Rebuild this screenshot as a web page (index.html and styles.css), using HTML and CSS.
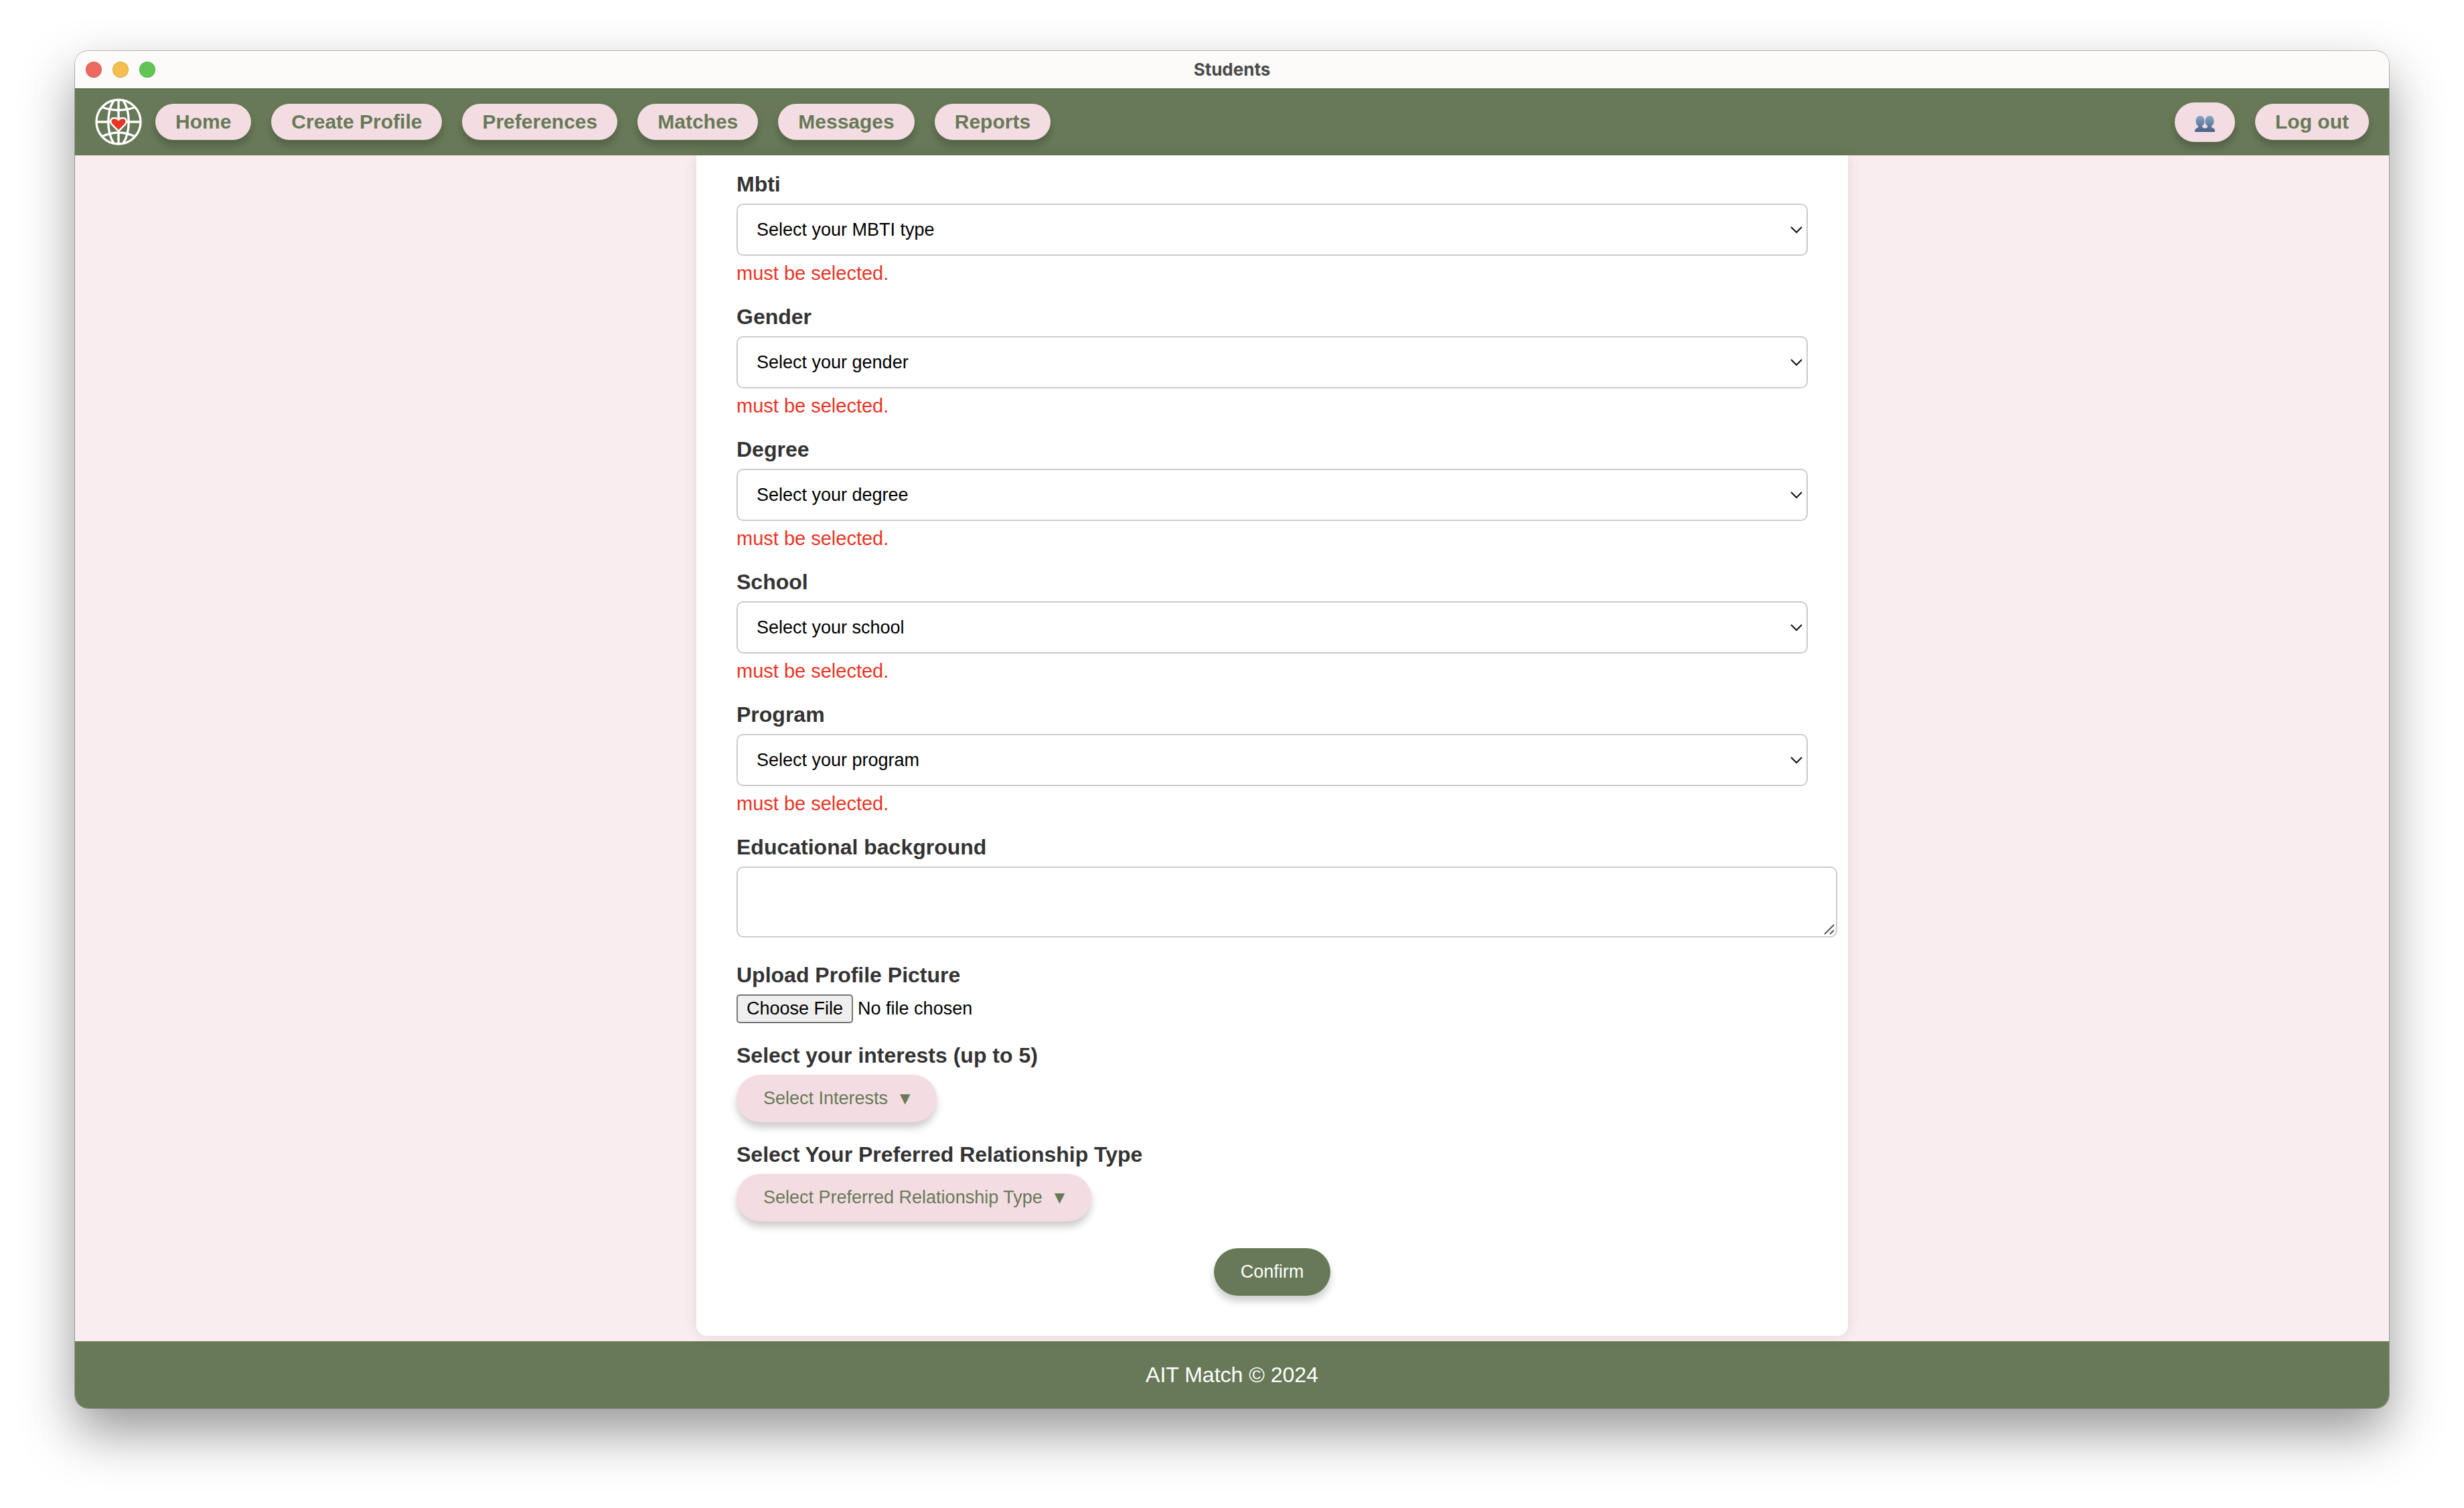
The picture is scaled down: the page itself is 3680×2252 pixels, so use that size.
FILE: index.html
```html
<!DOCTYPE html>
<html lang="en">
<head>
  <meta charset="utf-8">
  <title>Students</title>
  <link rel="stylesheet" href="styles.css">
</head>
<body>
  <div class="window">
    <div class="titlebar">
      <div class="lights">
        <span class="light light-close"></span>
        <span class="light light-minimize"></span>
        <span class="light light-zoom"></span>
      </div>
      <span class="window-title">Students</span>
    </div>

    <header class="navbar">
      <svg class="logo" viewBox="0 0 70 70" role="img" aria-label="AIT Match">
        <g fill="none" stroke="#fff" stroke-width="3.4">
          <circle cx="35" cy="35" r="33"/>
          <path d="M35 2V68M2 35H68"/>
          <path d="M28 3C17 20 17 50 28 67M42 3C53 20 53 50 42 67"/>
          <path d="M10 13Q35 22 60 13M10 57Q35 45 60 57"/>
        </g>
        <path id="heart" d="M35 47L26 38C23.500 35 24 31 28 30.500C31 30 34 32 35 34C36 32 39 30 42 30.500C46 31 46.500 35 44 38Z" fill="#fff" stroke="#fff" stroke-width="5" stroke-linejoin="round"/>
        <path d="M35 47L26 38C23.500 35 24 31 28 30.500C31 30 34 32 35 34C36 32 39 30 42 30.500C46 31 46.500 35 44 38Z" fill="#eb3323"/>
      </svg>
      <nav class="links">
        <a class="pill" href="#">Home</a>
        <a class="pill" href="#">Create Profile</a>
        <a class="pill" href="#">Preferences</a>
        <a class="pill" href="#">Matches</a>
        <a class="pill" href="#">Messages</a>
        <a class="pill" href="#">Reports</a>
      </nav>
      <div class="account">
        <button class="pill pill-icon" type="button" aria-label="Users">
          <svg class="users" viewBox="0 0 30 24">
            <defs>
              <linearGradient id="bust" x1="0" y1="0" x2="0" y2="1">
                <stop offset="0" stop-color="#84a6c6"/>
                <stop offset="1" stop-color="#476186"/>
              </linearGradient>
            </defs>
            <path fill="url(#bust)" d="M8 0C12 0 14.500 3 14.500 8C14.500 12 12.500 14 11 15V17C13 18 14 18 15 19C16 18 18 18 19 17V15C17 14 15.500 12 15.500 8C15.500 3 18 0 22 0C26 0 28.500 3 28.500 8C28.500 12 26.500 14 25 15V17C29 19 30 19 30 24H0C0 19 2 19 5 17V15C3 14 1.500 12 1.500 8C1.500 3 4 0 8 0Z"/>
          </svg>
        </button>
        <a class="pill" href="#">Log out</a>
      </div>
    </header>

    <main class="content">
      <form class="card">
        <div class="field">
          <label class="label" for="mbti">Mbti</label>
          <select class="select" id="mbti"><option>Select your MBTI type</option></select>
          <span class="error">must be selected.</span>
        </div>
        <div class="field">
          <label class="label" for="gender">Gender</label>
          <select class="select" id="gender"><option>Select your gender</option></select>
          <span class="error">must be selected.</span>
        </div>
        <div class="field">
          <label class="label" for="degree">Degree</label>
          <select class="select" id="degree"><option>Select your degree</option></select>
          <span class="error">must be selected.</span>
        </div>
        <div class="field">
          <label class="label" for="school">School</label>
          <select class="select" id="school"><option>Select your school</option></select>
          <span class="error">must be selected.</span>
        </div>
        <div class="field">
          <label class="label" for="program">Program</label>
          <select class="select" id="program"><option>Select your program</option></select>
          <span class="error">must be selected.</span>
        </div>
        <div class="field field-text">
          <label class="label" for="education">Educational background</label>
          <textarea class="textarea" id="education"></textarea>
        </div>
        <div class="field">
          <label class="label" for="picture">Upload Profile Picture</label>
          <input class="file" id="picture" type="file">
        </div>
        <div class="field">
          <span class="label" id="interests-label">Select your interests (up to 5)</span>
          <button class="button button-menu" type="button" aria-describedby="interests-label">Select Interests <span class="caret">▼</span></button>
        </div>
        <div class="field">
          <span class="label" id="relationship-label">Select Your Preferred Relationship Type</span>
          <button class="button button-menu" type="button" aria-describedby="relationship-label">Select Preferred Relationship Type <span class="caret">▼</span></button>
        </div>
        <button class="button button-confirm" type="submit">Confirm</button>
      </form>
    </main>

    <footer class="footer">AIT Match © 2024</footer>
  </div>
</body>
</html>
```
FILE: styles.css
```css
:root {
  --green: #677957;
  --pink: #f3dde2;
  --blush: #faedef;
  --red: #eb3323;
}

* {
  box-sizing: border-box;
}

body {
  margin: 0;
  padding: 76px 112px 148px;
  background: #fff;
  font-family: "Liberation Sans", Arial, sans-serif;
  font-size: 32px;
  color: #333;
}

.window {
  border-radius: 20px;
  background: var(--blush);
  overflow: hidden;
  box-shadow: 0 0 0 1px rgba(0, 0, 0, 0.25), 0 36px 80px rgba(0, 0, 0, 0.41);
}

.titlebar {
  display: grid;
  grid-template-columns: 1fr auto 1fr;
  align-items: center;
  height: 56px;
  padding: 0 16px;
  background: #fcfbf9;
}

.lights {
  display: flex;
  gap: 16px;
}

.light {
  width: 24px;
  height: 24px;
  border: 1px solid rgba(0, 0, 0, 0.12);
  border-radius: 50%;
}

.light-close { background: #ed6a5f; }
.light-minimize { background: #f5bf4f; }
.light-zoom { background: #61c555; }

.window-title {
  font-family: Inter, sans-serif;
  font-size: 26px;
  font-weight: 700;
  line-height: 30px;
  color: #4a4a4a;
}

.navbar {
  display: flex;
  align-items: center;
  gap: 20px;
  height: 100px;
  padding: 0 30px;
  background: var(--green);
  box-shadow: inset 0 1px #43552f;
}

.logo {
  width: 70px;
  height: 70px;
}

.links,
.account {
  display: flex;
  align-items: center;
  gap: 30px;
}

.account {
  margin-left: auto;
}

.pill {
  padding: 10px 30px;
  border: 0;
  border-radius: 30px;
  background: var(--pink);
  box-shadow: 0 8px 12px rgba(0, 0, 0, 0.2);
  font-size: 30px;
  font-weight: 700;
  line-height: 34px;
  color: var(--green);
  text-decoration: none;
}

.pill-icon {
  display: flex;
  padding: 20px 30px 15px;
}

.users {
  width: 30px;
  height: 24px;
}

.content {
  display: flex;
  justify-content: center;
  padding: 0 0 8px 120px;
}

.card {
  display: flex;
  flex-direction: column;
  gap: 30px;
  width: 100%;
  max-width: 1720px;
  padding: 25px 60px 60px;
  border-radius: 0 0 16px 16px;
  background: #fff;
  box-shadow: 0 0 20px rgba(0, 0, 0, 0.1);
}

.field {
  display: flex;
  flex-direction: column;
  align-items: flex-start;
  gap: 10px;
}

.field-text {
  padding-bottom: 8px;
}

.label {
  font-weight: 700;
  line-height: 37px;
}

.select,
.textarea {
  border: 2px solid #ccc;
  border-radius: 10px;
  background: #fff no-repeat;
  font: 27px "Liberation Sans", Arial, sans-serif;
  color: #000;
}

.select {
  width: 100%;
  height: 78px;
  padding: 0 28px;
  appearance: none;
  background-image: url("data:image/svg+xml,%3Csvg xmlns='http://www.w3.org/2000/svg' width='18' height='12'%3E%3Cpath d='M1 2L9 10L17 2' fill='none' stroke='%23111' stroke-width='2'/%3E%3C/svg%3E");
  background-position: right 6px center;
}

.textarea {
  display: block;
  width: calc(100% + 44px);
  height: 106px;
  padding: 20px;
  resize: none;
  background-image: url("data:image/svg+xml,%3Csvg xmlns='http://www.w3.org/2000/svg' width='16' height='16'%3E%3Cpath d='M1 15L15 1M9 15L15 9' fill='none' stroke='%23555' stroke-width='2'/%3E%3C/svg%3E");
  background-position: right 2px bottom 2px;
}

.error {
  font-size: 29px;
  line-height: 33px;
  color: var(--red);
}

.file {
  height: 43px;
  font: 27px "Liberation Sans", Arial, sans-serif;
  color: #000;
}

.file::file-selector-button {
  height: 43px;
  margin: 0 7px 0 0;
  padding: 0 13px;
  border: 2px solid #767676;
  border-radius: 5px;
  background: #efefef;
  font: inherit;
  color: #000;
}

.button {
  padding: 20px 40px;
  border: 0;
  border-radius: 36px;
  box-shadow: 0 8px 12px rgba(0, 0, 0, 0.2);
  font: 27px/31px "Liberation Sans", Arial, sans-serif;
}

.button-menu {
  display: flex;
  align-items: center;
  gap: 18px;
  background: var(--pink);
  color: var(--green);
}

.caret {
  font-family: "DejaVu Sans", sans-serif;
  font-size: 20px;
}

.button-confirm {
  align-self: center;
  margin-top: 10px;
  background: var(--green);
  color: #fff;
}

.footer {
  padding: 32px;
  background: var(--green);
  line-height: 36px;
  color: #fff;
  text-align: center;
}
```
